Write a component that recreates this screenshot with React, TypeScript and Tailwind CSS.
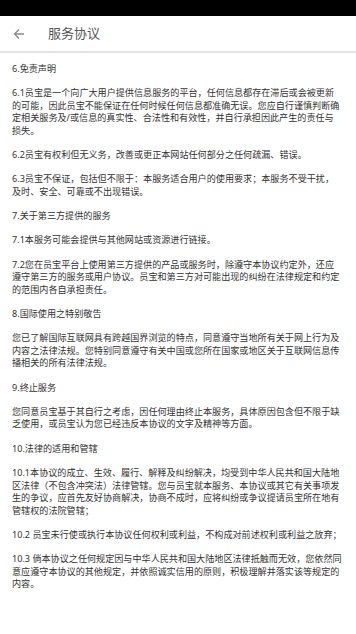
const sections: string[][] = [
  ['6.免责声明'],
  [
    '6.1员宝是一个向广大用户提供信息服务的平台，任何信息都存在滞后或会被更新',
    '的可能，因此员宝不能保证在任何时候任何信息都准确无误。您应自行谨慎判断确',
    '定相关服务及/或信息的真实性、合法性和有效性，并自行承担因此产生的责任与',
    '损失。'
  ],
  ['6.2员宝有权利但无义务，改善或更正本网站任何部分之任何疏漏、错误。'],
  [
    '6.3员宝不保证，包括但不限于：本服务适合用户的使用要求；本服务不受干扰，',
    '及时、安全、可靠或不出现错误。'
  ],
  ['7.关于第三方提供的服务'],
  ['7.1本服务可能会提供与其他网站或资源进行链接。'],
  [
    '7.2您在员宝平台上使用第三方提供的产品或服务时，除遵守本协议约定外，还应',
    '遵守第三方的服务或用户协议。员宝和第三方对可能出现的纠纷在法律规定和约定',
    '的范围内各自承担责任。'
  ],
  ['8.国际使用之特别敬告'],
  [
    '您已了解国际互联网具有跨越国界浏览的特点，同意遵守当地所有关于网上行为及',
    '内容之法律法规。您特别同意遵守有关中国或您所在国家或地区关于互联网信息传',
    '播相关的所有法律法规。'
  ],
  ['9.终止服务'],
  [
    '您同意员宝基于其自行之考虑，因任何理由终止本服务，具体原因包含但不限于缺',
    '乏使用，或员宝认为您已经违反本协议的文字及精神等方面。'
  ],
  ['10.法律的适用和管辖'],
  [
    '10.1本协议的成立、生效、履行、解释及纠纷解决，均受到中华人民共和国大陆地',
    '区法律（不包含冲突法）法律管辖。您与员宝就本服务、本协议或其它有关事项发',
    '生的争议，应首先友好协商解决，协商不成时，应将纠纷或争议提请员宝所在地有',
    '管辖权的法院管辖；'
  ],
  ['10.2 员宝未行使或执行本协议任何权利或利益，不构成对前述权利或利益之放弃；'],
  [
    '10.3 倘本协议之任何规定因与中华人民共和国大陆地区法律抵触而无效，您依然同',
    '意应遵守本协议的其他规定，并依照诚实信用的原则，积极理解并落实该等规定的',
    '内容。'
  ]
];

export default function App() {
  return (
    <div className="min-h-[634px] w-[356px] bg-white font-['Noto_Sans','Noto_Sans_CJK_SC',sans-serif]">
      <div className="h-4 bg-black" />
      <header className="flex h-[37px] items-center border-b-2 border-[#e2e2e2] bg-white">
        <svg className="ml-[13px] h-3 w-3" viewBox="0 0 12 12" fill="none" stroke="#8a8a8a" strokeWidth="1.3">
          <path d="M11 6H1.5M6 1.5L1.5 6 6 10.5" />
        </svg>
        <h1 className="ml-[23px] text-[13px] text-[#555]">服务协议</h1>
      </header>
      <main className="flex flex-col gap-[11.8px] px-3 pt-[10px] text-[9.1px] leading-[12.5px] text-[#333]">
        {sections.map((lines, i) => (
          <p key={i} className="whitespace-nowrap">
            {lines.map((line, j) => (
              <span key={j}>
                {line}
                {j < lines.length - 1 && <br />}
              </span>
            ))}
          </p>
        ))}
      </main>
    </div>
  );
}
